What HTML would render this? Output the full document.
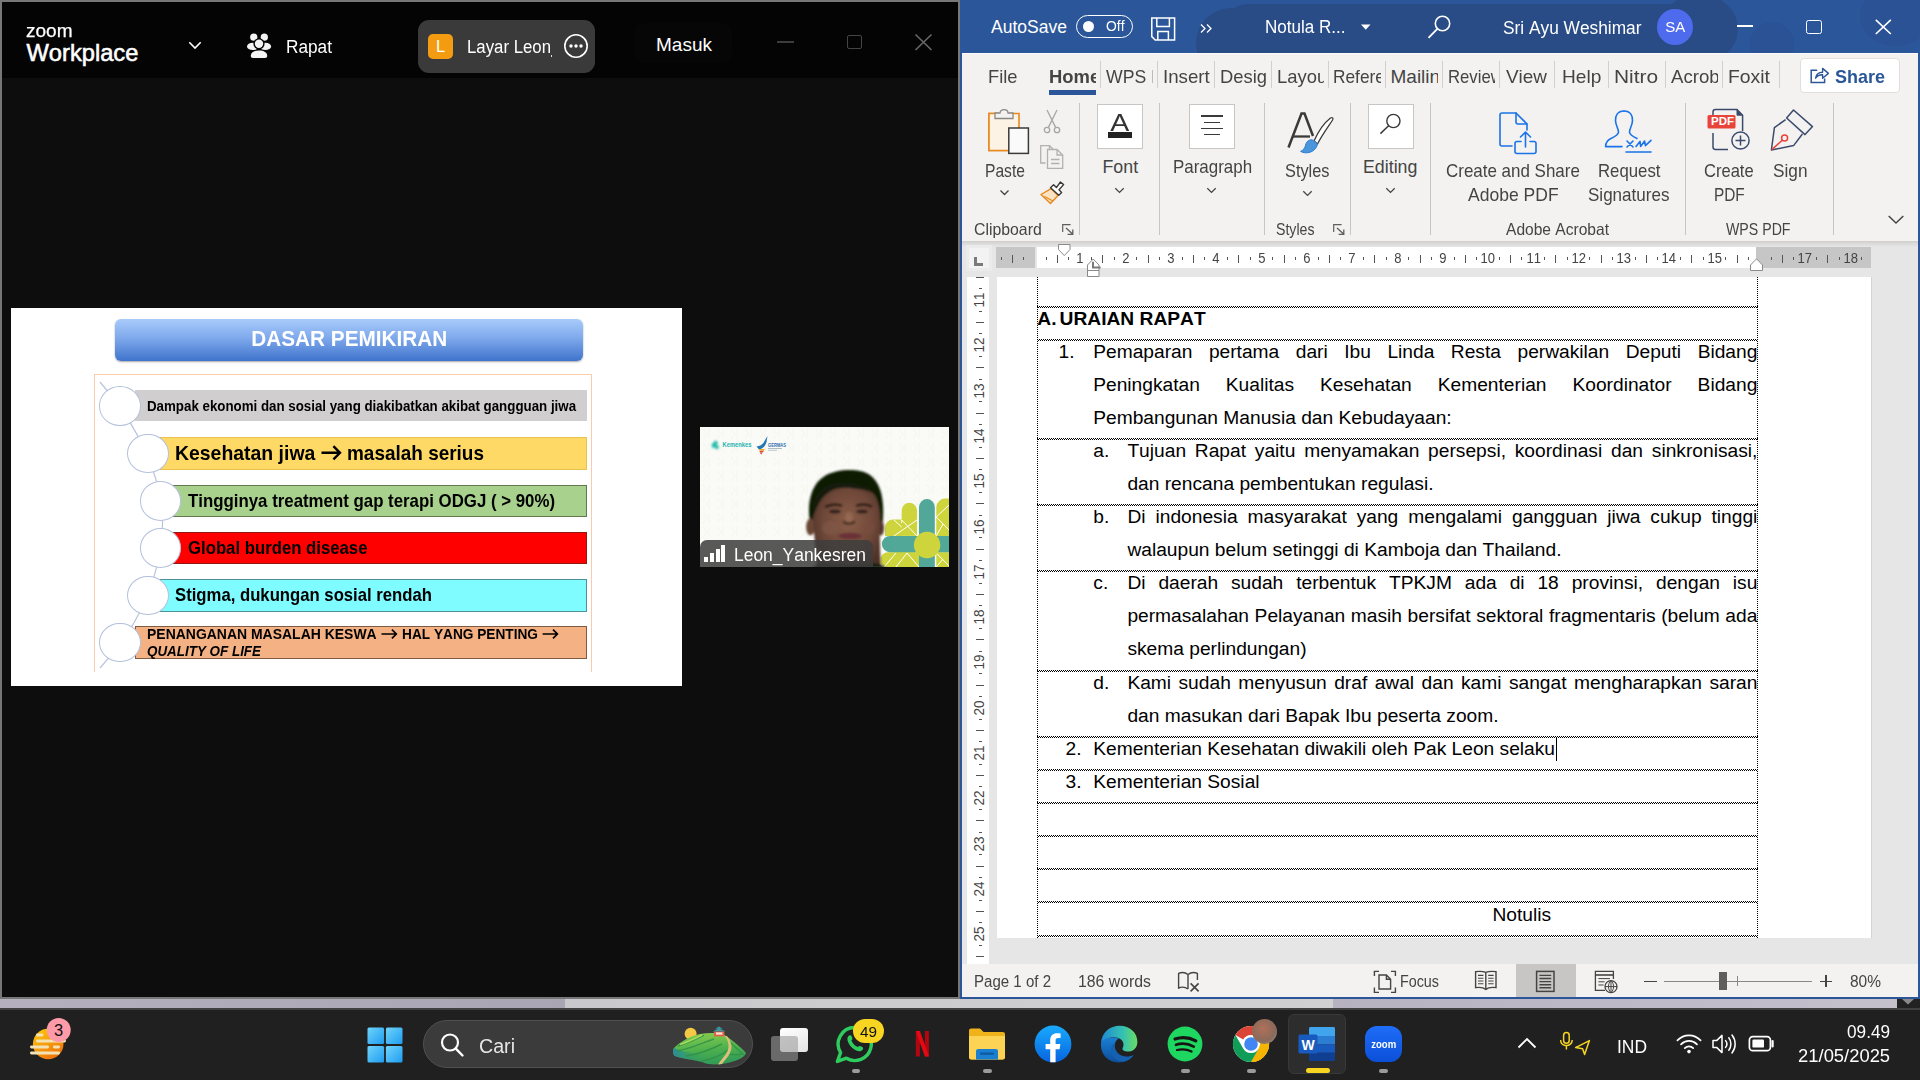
<!DOCTYPE html>
<html><head><meta charset="utf-8"><title>Screen</title>
<style>
html,body{margin:0;padding:0}
body{width:1920px;height:1080px;overflow:hidden;position:relative;background:#bdb9c6;font-family:"Liberation Sans",sans-serif;font-kerning:none;font-variant-ligatures:none;}
.a{position:absolute;box-sizing:border-box}
.t{position:absolute;white-space:nowrap;display:block}
svg{position:absolute;overflow:visible}
</style></head><body>
<div class="a" style="left:0px;top:0px;width:960px;height:999px;background:#777777;"></div>
<div class="a" style="left:2px;top:2px;width:956px;height:995px;background:#0d0d0d;"></div>
<div class="a" style="left:2px;top:2px;width:956px;height:76px;background:#040404;"></div>
<span class="t" style="left:25.60px;top:15.20px;font-size:18.9px;line-height:31px;color:#fff;transform:scaleX(1.0083);transform-origin:0 0;-webkit-text-stroke:0.25px #fff;">zoom</span>
<span class="t" style="left:26.50px;top:35.30px;font-size:23.7px;line-height:36px;color:#fff;-webkit-text-stroke:0.55px #fff;">Workplace</span>
<svg style="left:186px;top:38px" width="18" height="14"><path d="M3.3 4.3 L9 10 L14.7 4.3" fill="none" stroke="#fff" stroke-width="1.6"/></svg>
<svg style="left:246px;top:33px" width="26" height="26" viewBox="0 0 26 26">
<circle cx="7.75" cy="4.2" r="3.6" fill="#f4f4f4"/><circle cx="18.3" cy="4.2" r="3.6" fill="#f4f4f4"/>
<ellipse cx="6.8" cy="13.4" rx="5.8" ry="3.7" fill="#f4f4f4"/><ellipse cx="19.3" cy="13.4" rx="5.8" ry="3.7" fill="#f4f4f4"/>
<circle cx="13" cy="10.8" r="5.6" fill="#040404"/><circle cx="13" cy="10.8" r="4.2" fill="#f4f4f4"/>
<path d="M4.8 22.8 C4.8 19.4 8 17.4 13 17.4 C18 17.4 21.2 19.4 21.2 22.8 C21.2 24.3 20.4 25 19 25 H7 C5.6 25 4.8 24.3 4.8 22.8Z" fill="#f4f4f4" stroke="#040404" stroke-width="1.5" paint-order="stroke"/>
</svg>
<span class="t" style="left:286.00px;top:32.00px;font-size:18px;line-height:30px;color:#fff;transform:scaleX(0.9576);transform-origin:0 0;">Rapat</span>
<div class="a" style="left:418px;top:20px;width:177px;height:53px;background:#3a3a3a;border-radius:11px;"></div>
<div class="a" style="left:428px;top:34px;width:25px;height:25px;background:#f39c12;border-radius:5px;"></div>
<span class="t" style="left:435.91px;top:32.30px;font-size:16.5px;line-height:28px;color:#fff;">L</span>
<span class="t" style="left:467.00px;top:31.80px;font-size:18px;line-height:30px;color:#fff;transform:scaleX(0.9325);transform-origin:0 0;">Layar Leon</span>
<div class="a" style="left:551px;top:55px;width:1px;height:2px;background:#ddd;"></div>
<svg style="left:563px;top:33px" width="26" height="26"><circle cx="13" cy="13" r="11.2" fill="none" stroke="#fff" stroke-width="1.6"/><circle cx="8" cy="13" r="1.7" fill="#fff"/><circle cx="13" cy="13" r="1.7" fill="#fff"/><circle cx="18" cy="13" r="1.7" fill="#fff"/></svg>
<div class="a" style="left:635px;top:23px;width:97px;height:40px;background:#060606;border-radius:8px;"></div>
<span class="t" style="left:656.00px;top:28.60px;font-size:19px;line-height:31px;color:#fff;">Masuk</span>
<div class="a" style="left:777px;top:41px;width:17px;height:1.6px;background:#3c3c3c;"></div>
<div class="a" style="left:847px;top:35px;width:15px;height:14px;background:transparent;border:1.5px solid #444;border-radius:2px;"></div>
<svg style="left:914px;top:33px" width="20" height="20"><path d="M1.5 1.5 L17.5 17 M17.5 1.5 L1.5 17" stroke="#686868" stroke-width="1.6" fill="none"/></svg>
<div class="a" style="left:11px;top:308px;width:671px;height:378px;background:#ffffff;"></div>
<div class="a" style="left:115px;top:319px;width:468px;height:42px;background:linear-gradient(#a9cbfb 0%,#7fa9ec 45%,#3f74cc 100%);border-radius:6px;box-shadow:0 1px 2px rgba(0,0,0,.35);"></div>
<span class="t" style="left:243.24px;top:321.00px;font-size:22.5px;line-height:35px;color:#fff;font-weight:bold;transform:scaleX(0.9223);transform-origin:50% 0;">DASAR PEMIKIRAN</span>
<div class="a" style="left:94px;top:374px;width:498px;height:298px;background:transparent;border:1.5px solid #f8cbad;border-bottom:none;"></div>
<svg style="left:0;top:0" width="700" height="700"><path d="M100 382 C 150 440,170 500,160 548 C 155 590,135 630,100 668" fill="none" stroke="#b8c4dc" stroke-width="1.2"/></svg>
<div class="a" style="left:135px;top:390px;width:452px;height:31px;background:#d0cece;border:none;"></div>
<div class="a" style="left:160px;top:437px;width:427px;height:33px;background:#ffd966;border:1px solid #e8c14e;"></div>
<div class="a" style="left:172px;top:485px;width:415px;height:32px;background:#a9d18e;border:1px solid #62784f;"></div>
<div class="a" style="left:172px;top:532px;width:415px;height:32px;background:#ff0000;border:1px solid #8f1a10;"></div>
<div class="a" style="left:160px;top:579px;width:427px;height:33px;background:#7ffcff;border:1px solid #4f8f96;"></div>
<div class="a" style="left:135px;top:626px;width:452px;height:33px;background:#f4b183;border:1px solid #7d5a42;"></div>
<span class="t" style="left:147.00px;top:392.50px;font-size:14px;line-height:26px;color:#000;font-weight:bold;transform:scaleX(0.9508);transform-origin:0 0;">Dampak ekonomi dan sosial yang diakibatkan akibat gangguan jiwa</span>
<span class="t" style="left:174.50px;top:436.00px;font-size:21px;line-height:33px;color:#000;font-weight:bold;transform:scaleX(0.9246);transform-origin:0 0;">Kesehatan jiwa</span>
<span class="t" style="left:347.00px;top:436.00px;font-size:21px;line-height:33px;color:#000;font-weight:bold;transform:scaleX(0.9027);transform-origin:0 0;">masalah serius</span>
<svg style="left:0;top:0" width="700" height="700"><path d="M321.5 452.8 H339 M333.4 446.2 L340 452.8 L333.4 459.40000000000003" fill="none" stroke="#000" stroke-width="2.4"/></svg>
<span class="t" style="left:187.50px;top:484.50px;font-size:18.5px;line-height:31px;color:#000;font-weight:bold;transform:scaleX(0.9096);transform-origin:0 0;">Tingginya treatment gap terapi ODGJ ( &gt; 90%)</span>
<span class="t" style="left:187.50px;top:531.50px;font-size:18.5px;line-height:31px;color:#000;font-weight:bold;transform:scaleX(0.9046);transform-origin:0 0;">Global burden disease</span>
<span class="t" style="left:174.50px;top:578.50px;font-size:18.5px;line-height:31px;color:#000;font-weight:bold;transform:scaleX(0.9025);transform-origin:0 0;">Stigma, dukungan sosial rendah</span>
<span class="t" style="left:147.00px;top:621.00px;font-size:14.5px;line-height:26px;color:#000;font-weight:bold;transform:scaleX(0.9633);transform-origin:0 0;">PENANGANAN MASALAH KESWA</span>
<span class="t" style="left:401.80px;top:621.00px;font-size:14.5px;line-height:26px;color:#000;font-weight:bold;transform:scaleX(0.9431);transform-origin:0 0;">HAL YANG PENTING</span>
<svg style="left:0;top:0" width="700" height="700"><path d="M381.5 634 H395.3 M391.90000000000003 629.6 L396.3 634 L391.90000000000003 638.4" fill="none" stroke="#000" stroke-width="1.7"/></svg>
<svg style="left:0;top:0" width="700" height="700"><path d="M542.6 634 H556.4 M553.0 629.6 L557.4 634 L553.0 638.4" fill="none" stroke="#000" stroke-width="1.7"/></svg>
<span class="t" style="left:147.00px;top:637.50px;font-size:14.5px;line-height:26px;color:#000;font-weight:bold;font-style:italic;transform:scaleX(0.9251);transform-origin:0 0;">QUALITY OF LIFE</span>
<div class="a" style="left:99.3px;top:386.2px;width:41.4px;height:39.6px;border-radius:50%;background:#fff;border:1px solid #b4c0dc;"></div>
<div class="a" style="left:127.3px;top:433.7px;width:41.4px;height:39.6px;border-radius:50%;background:#fff;border:1px solid #b4c0dc;"></div>
<div class="a" style="left:139.6px;top:481.2px;width:41.4px;height:39.6px;border-radius:50%;background:#fff;border:1px solid #b4c0dc;"></div>
<div class="a" style="left:139.6px;top:528.2px;width:41.4px;height:39.6px;border-radius:50%;background:#fff;border:1px solid #b4c0dc;"></div>
<div class="a" style="left:127.3px;top:575.7px;width:41.4px;height:39.6px;border-radius:50%;background:#fff;border:1px solid #b4c0dc;"></div>
<div class="a" style="left:99.3px;top:622.8px;width:41.4px;height:39.6px;border-radius:50%;background:#fff;border:1px solid #b4c0dc;"></div>
<div class="a" style="left:700px;top:427px;width:249px;height:140px;background:#f4f6ee;overflow:hidden;"></div>
<svg style="left:700px;top:427px" width="249" height="140" viewBox="0 0 249 140">
<defs><clipPath id="vc"><rect width="249" height="140"/></clipPath>
<filter id="bl" x="-10%" y="-10%" width="120%" height="120%"><feGaussianBlur stdDeviation="1.1"/></filter>
<filter id="bl2" x="-20%" y="-20%" width="140%" height="140%"><feGaussianBlur stdDeviation="2"/></filter>
<radialGradient id="fg" cx="52%" cy="45%" r="60%"><stop offset="0" stop-color="#8a5e48"/><stop offset="0.6" stop-color="#70493a"/><stop offset="1" stop-color="#4f3228"/></radialGradient>
<pattern id="bgp" width="14" height="14" patternUnits="userSpaceOnUse"><path d="M3 2 L7 7 L3 12 M9 2 V12" stroke="#f3f5ed" stroke-width="1" fill="none"/></pattern></defs>
<g clip-path="url(#vc)">
<rect width="249" height="140" fill="#fafbf6"/><rect width="249" height="140" fill="url(#bgp)"/>
<!-- logos -->
<g filter="url(#bl)" opacity="0.95">
<path d="M11.5 17.5 l4.2 -4.2 l2.6 2.6 l-1.6 1.6 l2.6 2.6 l-2.6 2.6 l-2.6 -2.6 l-1.6 1.6 z" fill="#1fb9a9"/>
</g>
<text x="22.5" y="20" font-family="Liberation Sans, sans-serif" font-weight="bold" font-size="6.3" fill="#1fb3b3" textLength="29" lengthAdjust="spacingAndGlyphs">Kemenkes</text>
<path d="M56.5 19.5 C60 19 63 17.5 64.5 14 L67.5 9 L66.5 15 C65.5 19 62.5 22 59 22.5 Z" fill="#2478b8"/>
<path d="M59 22 h6 l-1 1.5 h-4.6 z" fill="#f0b020"/><path d="M59.4 23.8 h4.6 l-1 1.5 h-3 z" fill="#e04a30"/><path d="M59.8 25.6 h2.8 l-1.4 1.8 z" fill="#d83030"/>
<text x="68" y="19.6" font-family="Liberation Sans, sans-serif" font-weight="bold" font-size="5.2" fill="#2b6cb0" textLength="18" lengthAdjust="spacingAndGlyphs">GERMAS</text>
<rect x="68" y="21" width="14" height="0.9" fill="#a8b4c0"/><rect x="68" y="22.8" width="9" height="0.9" fill="#b8c2cc"/>
<!-- decor -->
<g>
<rect x="180.8" y="125.2" width="38.2" height="16" rx="7" fill="#cdd43c"/><rect x="195" y="125.2" width="24" height="16" fill="#cdd43c"/>
<path d="M196 140 L207 126 L219 140 M184 140 L196 126" stroke="#fff" stroke-width="1" fill="none"/>
<rect x="236.3" y="125.2" width="13" height="16" fill="#cdd43c"/><path d="M236.3 126 L249 139 M236.3 140 L243 132" stroke="#fff" stroke-width="1" fill="none"/>
<path d="M236.3 80 a9 9 0 0 1 9 -8.4 h4 v37.3 h-13 z" fill="#cdd43c"/><path d="M236.3 90 L249 78 M236.3 90 L249 103 M236.3 108.9 L243 97" stroke="#fff" stroke-width="1" fill="none"/>
<path d="M201.7 93 V83.4 a7.65 7.65 0 0 1 15.3 0 V93 z" fill="#cdd43c"/>
<rect x="194" y="93" width="23" height="15.9" fill="#cdd43c"/>
<path d="M185 108.9 v-8.2 a8.1 8.1 0 0 1 8.1 -8.1 h8.6 v16.3 z" fill="#cdd43c"/>
<path d="M194 108.9 L217 93 M201.7 93 L217 108.9 M194 93 L201.7 100 M201.7 93 V96" stroke="#fff" stroke-width="1" fill="none"/>
<path d="M219 140 V80 a7.9 7.9 0 0 1 15.8 0 V140 z" fill="#52a898"/>
<path d="M249 108.9 H190 a8.15 8.15 0 0 0 0 16.3 H249 z" fill="#52a898"/>
<circle cx="227.1" cy="118" r="13.2" fill="#cdd43c"/>
</g>
<!-- person -->
<g filter="url(#bl)">
<path d="M111 100 C106 80 110 58 124 49.5 C134 43 150 42 160 44 C173 46 182 58 183 78 C183.5 88 183 96 181.5 104 L170 70 L124 70 Z" fill="#0d1a05"/>
<ellipse cx="110.5" cy="100" rx="4.4" ry="8.5" fill="#6a4636"/><ellipse cx="181" cy="101" rx="3" ry="7.5" fill="#553629"/>
<path d="M113.5 98 C111.5 78 117 63.5 131 59 C144 56 158 56.5 168 61.5 C178 67 181 82 180 98 C179.5 112 180 126 181 140 L117 140 C116 128 114.5 112 113.5 98 Z" fill="url(#fg)"/>
<path d="M112.5 92 C111 72 120 58.5 134 56.5 C148 54.5 164 56.5 175 67 C167 62.5 150 60 138 61.5 C126 63.5 118 74 112.5 92 Z" fill="#161a0a"/>
<path d="M125 80 C131 77 138 77 142 79 M156 79 C161 77 168 77 172 80" stroke="#2e1d16" stroke-width="2.6" fill="none"/>
<ellipse cx="135" cy="84.5" rx="6" ry="2" fill="#33211b"/><ellipse cx="162" cy="84.5" rx="6" ry="2" fill="#33211b"/>
<path d="M143 94.5 C146 97.5 152 97.5 155 94.5" stroke="#3e261d" stroke-width="2.2" fill="none"/>
<ellipse cx="149" cy="90" rx="4" ry="5" fill="#9a6c56" opacity="0.7"/>
<ellipse cx="150" cy="109" rx="12" ry="3.2" fill="#6a3038"/>
<ellipse cx="130" cy="101" rx="8" ry="7" fill="#84594a" opacity="0.55"/><ellipse cx="168" cy="101" rx="7" ry="7" fill="#7a4e40" opacity="0.5"/>
<path d="M112 141 C116 137 122 135.5 130 137 L170 137 C176 135.5 182 137 186 141 Z" fill="#12240f"/>
</g>
</g></svg>
<div class="a" style="left:700px;top:539.5px;width:173px;height:27.5px;background:rgba(62,62,62,0.86);border-radius:7px 7px 0 0;"></div>
<div class="a" style="left:704px;top:557.2px;width:4px;height:5.3px;background:#fff;"></div>
<div class="a" style="left:709.8px;top:553.3px;width:4px;height:9.2px;background:#fff;"></div>
<div class="a" style="left:715.6px;top:549.2px;width:4px;height:13.3px;background:#fff;"></div>
<div class="a" style="left:721.4px;top:545.2px;width:4px;height:17.3px;background:#fff;"></div>
<span class="t" style="left:734.00px;top:540.00px;font-size:18px;line-height:30px;color:#fff;transform:scaleX(0.9697);transform-origin:0 0;">Leon_Yankesren</span>
<div class="a" style="left:960px;top:0px;width:960px;height:999px;background:#2b579a;"></div>
<div class="a" style="left:960px;top:0;width:960px;height:53px;overflow:hidden"><div class="a" style="left:262px;top:4px;width:490px;height:60px;background:#294c87;border-radius:26px 30px 0 0"></div><div class="a" style="left:236px;top:8px;width:70px;height:70px;background:#294c87;border-radius:50%"></div><div class="a" style="left:700px;top:-6px;width:78px;height:70px;background:#294c87;border-radius:50%"></div><div class="a" style="left:790px;top:22px;width:44px;height:44px;background:#2a5295;border-radius:50%"></div><div class="a" style="left:900px;top:-14px;width:70px;height:60px;background:#2a5295;border-radius:50%"></div></div>
<span class="t" style="left:991.00px;top:12.00px;font-size:17.5px;line-height:30px;color:#fff;">AutoSave</span>
<div class="a" style="left:1076px;top:14.5px;width:57px;height:23px;background:transparent;border:1.5px solid #fff;border-radius:12px;"></div>
<div class="a" style="left:1082.5px;top:20.5px;width:11px;height:11px;background:#fff;border-radius:50%;"></div>
<span class="t" style="left:1105.50px;top:13.00px;font-size:14px;line-height:26px;color:#fff;transform:scaleX(0.9908);transform-origin:0 0;">Off</span>
<svg style="left:1150px;top:16px" width="27" height="26" viewBox="0 0 27 26"><path d="M1.8 2 H24.6 V24 H5.2 L1.8 20.6 Z" fill="none" stroke="#fff" stroke-width="1.5"/><path d="M6.8 2 V10.4 H19.4 V2" fill="none" stroke="#fff" stroke-width="1.5"/><path d="M7.8 24 V15.6 H18.4 V24" fill="none" stroke="#fff" stroke-width="1.5"/></svg>
<svg style="left:1199px;top:23px" width="14" height="12"><path d="M2 1.5 L6 5.5 L2 9.5 M8 1.5 L12 5.5 L8 9.5" fill="none" stroke="#fff" stroke-width="1.3"/></svg>
<span class="t" style="left:1264.50px;top:12.00px;font-size:17.5px;line-height:30px;color:#fff;transform:scaleX(0.9736);transform-origin:0 0;">Notula R...</span>
<svg style="left:1360px;top:23px" width="12" height="8"><path d="M1 1.5 H10.5 L5.75 6.8 Z" fill="#fff"/></svg>
<svg style="left:1425px;top:12px" width="30" height="30"><circle cx="17.5" cy="11.5" r="7.2" fill="none" stroke="#fff" stroke-width="1.6"/><path d="M12.3 16.8 L3.5 25.8" stroke="#fff" stroke-width="1.8" fill="none"/></svg>
<span class="t" style="left:1502.50px;top:12.50px;font-size:17.5px;line-height:30px;color:#fff;transform:scaleX(0.9891);transform-origin:0 0;">Sri Ayu Weshimar</span>
<div class="a" style="left:1657px;top:9px;width:36px;height:36px;background:#4f6bed;border-radius:50%;"></div>
<span class="t" style="left:1665.66px;top:14.00px;font-size:14px;line-height:26px;color:#fff;transform:scaleX(1.0707);transform-origin:50% 0;">SA</span>
<div class="a" style="left:1737px;top:25px;width:16px;height:1.6px;background:#fff;"></div>
<div class="a" style="left:1806px;top:19.5px;width:15.5px;height:14.5px;background:transparent;border:1.6px solid #fff;border-radius:2.5px;"></div>
<svg style="left:1874px;top:18px" width="19" height="18"><path d="M1.8 1.8 L16.8 16 M16.8 1.8 L1.8 16" stroke="#fff" stroke-width="1.6" fill="none"/></svg>
<div class="a" style="left:962px;top:53px;width:956px;height:188px;background:#f3f2f1;"></div>
<div class="a" style="left:962px;top:53px;width:956px;height:1px;background:#fbfbfa;"></div>
<span class="t" style="left:987.50px;top:61.00px;font-size:19px;line-height:31px;color:#444444;transform:scaleX(0.9635);transform-origin:0 0;">File</span>
<div class="a" style="left:1048.7px;top:60px;width:47.09999999999991px;height:32px;overflow:hidden"><span class="t" style="left:0.00px;top:1.00px;font-size:19px;line-height:31px;color:#444444;font-weight:bold;transform:scaleX(0.9700);transform-origin:0 0;">Home</span></div>
<div class="a" style="left:1049px;top:90px;width:47px;height:4.5px;background:#2b579a;"></div>
<div class="a" style="left:1100.0px;top:61px;width:1px;height:27px;background:#d2d0ce;"></div>
<div class="a" style="left:1157.0px;top:61px;width:1px;height:27px;background:#d2d0ce;"></div>
<div class="a" style="left:1214.0px;top:61px;width:1px;height:27px;background:#d2d0ce;"></div>
<div class="a" style="left:1271.0px;top:61px;width:1px;height:27px;background:#d2d0ce;"></div>
<div class="a" style="left:1328.0px;top:61px;width:1px;height:27px;background:#d2d0ce;"></div>
<div class="a" style="left:1385.0px;top:61px;width:1px;height:27px;background:#d2d0ce;"></div>
<div class="a" style="left:1442.0px;top:61px;width:1px;height:27px;background:#d2d0ce;"></div>
<div class="a" style="left:1499.0px;top:61px;width:1px;height:27px;background:#d2d0ce;"></div>
<div class="a" style="left:1554.0px;top:61px;width:1px;height:27px;background:#d2d0ce;"></div>
<div class="a" style="left:1608.0px;top:61px;width:1px;height:27px;background:#d2d0ce;"></div>
<div class="a" style="left:1665.0px;top:61px;width:1px;height:27px;background:#d2d0ce;"></div>
<div class="a" style="left:1722.0px;top:61px;width:1px;height:27px;background:#d2d0ce;"></div>
<div class="a" style="left:1779.0px;top:61px;width:1px;height:27px;background:#d2d0ce;"></div>
<div class="a" style="left:1105.7px;top:60px;width:47.799999999999955px;height:32px;overflow:hidden"><span class="t" style="left:0.00px;top:1.00px;font-size:19px;line-height:31px;color:#444444;transform:scaleX(0.9300);transform-origin:0 0;">WPS PDF</span></div>
<div class="a" style="left:1162.5px;top:60px;width:50.5px;height:32px;overflow:hidden"><span class="t" style="left:0.00px;top:1.00px;font-size:19px;line-height:31px;color:#444444;transform:scaleX(0.9840);transform-origin:0 0;">Insert</span></div>
<div class="a" style="left:1220px;top:60px;width:47.5px;height:32px;overflow:hidden"><span class="t" style="left:0.00px;top:1.00px;font-size:19px;line-height:31px;color:#444444;transform:scaleX(0.9680);transform-origin:0 0;">Design</span></div>
<div class="a" style="left:1276.5px;top:60px;width:47.5px;height:32px;overflow:hidden"><span class="t" style="left:0.00px;top:1.00px;font-size:19px;line-height:31px;color:#444444;transform:scaleX(0.9700);transform-origin:0 0;">Layout</span></div>
<div class="a" style="left:1333px;top:60px;width:48.299999999999955px;height:32px;overflow:hidden"><span class="t" style="left:0.00px;top:1.00px;font-size:19px;line-height:31px;color:#444444;transform:scaleX(0.9090);transform-origin:0 0;">References</span></div>
<div class="a" style="left:1390.5px;top:60px;width:47.799999999999955px;height:32px;overflow:hidden"><span class="t" style="left:0.00px;top:1.00px;font-size:19px;line-height:31px;color:#444444;">Mailings</span></div>
<div class="a" style="left:1447.5px;top:60px;width:47.5px;height:32px;overflow:hidden"><span class="t" style="left:0.00px;top:1.00px;font-size:19px;line-height:31px;color:#444444;transform:scaleX(0.8800);transform-origin:0 0;">Review</span></div>
<span class="t" style="left:1506.00px;top:61.00px;font-size:19px;line-height:31px;color:#444444;transform:scaleX(0.9955);transform-origin:0 0;">View</span>
<span class="t" style="left:1561.70px;top:61.00px;font-size:19px;line-height:31px;color:#444444;transform:scaleX(1.0057);transform-origin:0 0;">Help</span>
<div class="a" style="left:1613.7px;top:60px;width:47.299999999999955px;height:32px;overflow:hidden"><span class="t" style="left:0.00px;top:1.00px;font-size:19px;line-height:31px;color:#444444;transform:scaleX(1.1000);transform-origin:0 0;">Nitro Pro</span></div>
<div class="a" style="left:1670.5px;top:60px;width:47.799999999999955px;height:32px;overflow:hidden"><span class="t" style="left:0.00px;top:1.00px;font-size:19px;line-height:31px;color:#444444;transform:scaleX(0.9800);transform-origin:0 0;">Acrobat</span></div>
<span class="t" style="left:1727.50px;top:61.00px;font-size:19px;line-height:31px;color:#444444;transform:scaleX(1.0201);transform-origin:0 0;">Foxit</span>
<div class="a" style="left:1799.5px;top:57.5px;width:100px;height:35px;background:#fff;border:1px solid #e1dfdd;border-radius:4px;"></div>
<svg style="left:1809px;top:65px" width="22" height="20" viewBox="0 0 22 20"><path d="M8.2 5.2 H2.2 V17.6 H15.6 V13.4" fill="none" stroke="#2b579a" stroke-width="1.5"/><path d="M6.6 13.2 C7.2 9.2 10 7.2 13.6 7.2 V3.4 L19.4 8.4 L13.6 13.2 V9.8 C10.6 9.6 8.4 10.6 6.6 13.2 Z" fill="none" stroke="#2b579a" stroke-width="1.4" stroke-linejoin="round"/></svg>
<span class="t" style="left:1835.00px;top:61.00px;font-size:19px;line-height:31px;color:#2b579a;font-weight:bold;transform:scaleX(0.9469);transform-origin:0 0;">Share</span>
<div class="a" style="left:1079.0px;top:103px;width:1px;height:132px;background:#c8c6c4;"></div>
<div class="a" style="left:1159.0px;top:103px;width:1px;height:132px;background:#c8c6c4;"></div>
<div class="a" style="left:1264.0px;top:103px;width:1px;height:132px;background:#c8c6c4;"></div>
<div class="a" style="left:1350.0px;top:103px;width:1px;height:132px;background:#c8c6c4;"></div>
<div class="a" style="left:1430.0px;top:103px;width:1px;height:132px;background:#c8c6c4;"></div>
<div class="a" style="left:1685.0px;top:103px;width:1px;height:132px;background:#c8c6c4;"></div>
<div class="a" style="left:1832.5px;top:103px;width:1px;height:132px;background:#c8c6c4;"></div>
<svg style="left:986px;top:107px" width="46" height="48" viewBox="0 0 46 48">
<path d="M12 6.5 H3 V43.5 H22" fill="#fdebd0" stroke="#e8891c" stroke-width="1.6"/>
<path d="M3 6.5 H33 V24 H22 V43.5 H3 Z" fill="#fdf3e4" stroke="none"/>
<path d="M12 6.5 H3 V43.5 H22 M24 6.5 H33 V24" fill="none" stroke="#e8891c" stroke-width="1.6"/>
<path d="M9 11.5 V6 H14 C14 1.5 22 1.5 22 6 H27 V11.5 Z" fill="#f3f2f1" stroke="#8a8886" stroke-width="1.3"/>
<rect x="22.8" y="21" width="19.6" height="25.4" fill="#fafafa" stroke="#3b3a39" stroke-width="1.5"/>
</svg>
<span class="t" style="left:985.00px;top:155.60px;font-size:17.8px;line-height:30px;color:#444444;transform:scaleX(0.8788);transform-origin:0 0;">Paste</span>
<svg style="left:999px;top:189px" width="12" height="8"><path d="M1.5 1.5 L5.5 5.5 L9.5 1.5" fill="none" stroke="#444" stroke-width="1.3"/></svg>
<svg style="left:1042px;top:108px" width="20" height="27" viewBox="0 0 20 27"><g fill="none" stroke="#a8a6a4" stroke-width="1.3">
<path d="M5 2 L13.6 19.4 M15 2 L6.4 19.4"/><circle cx="5" cy="22" r="2.7"/><circle cx="15" cy="22" r="2.7"/></g></svg>
<svg style="left:1039px;top:144px" width="26" height="26" viewBox="0 0 26 26"><g fill="none" stroke="#b3b1af" stroke-width="1.3">
<path d="M6.5 19 H1.7 V1.7 H10.5 V5"/><path d="M10.5 1.7 L14 5"/>
<path d="M8.5 5.5 H18 L23.7 11 V24.3 H8.5 Z"/><path d="M18 5.5 V11 H23.7"/><path d="M12 15.5 H20.5 M12 19.5 H20.5"/></g></svg>
<svg style="left:1039px;top:180px" width="27" height="25" viewBox="0 0 27 25">
<path d="M2 14.5 L12 8.6 L19 15.6 L11.5 23.5 Z" fill="#fbe3c2" stroke="#e8891c" stroke-width="1.4" stroke-linejoin="round"/>
<path d="M5.5 16.5 L14 21" stroke="#e8891c" stroke-width="1.2"/>
<path d="M11.5 7.8 L14.6 4.8 L17.4 7.6 L21.4 2 L24.6 4.6 L20 9.8 L22.6 12.4 L19.8 15.2 Z" fill="#fff" stroke="#3b3a39" stroke-width="1.4" stroke-linejoin="round"/>
</svg>
<span class="t" style="left:974.00px;top:214.80px;font-size:16.5px;line-height:28px;color:#444444;transform:scaleX(0.9587);transform-origin:0 0;">Clipboard</span>
<svg style="left:1062px;top:223.5px" width="13" height="12" viewBox="0 0 13 12"><path d="M0.7 8 V0.7 H8.6" fill="none" stroke="#605e5c" stroke-width="1.2"/><path d="M4 4 L10.6 10 M10.8 5.4 V10.4 H5.6" fill="none" stroke="#605e5c" stroke-width="1.3"/></svg>
<div class="a" style="left:1097px;top:104px;width:46px;height:45px;background:#fff;border:1.5px solid #c8c6c4;"></div>
<span class="t" style="left:1112.33px;top:104.50px;font-size:23px;line-height:36px;color:#333;transform:scaleX(1.2386);transform-origin:50% 0;">A</span>
<div class="a" style="left:1108px;top:132px;width:24px;height:5.5px;background:#222;"></div>
<span class="t" style="left:1102.50px;top:152.00px;font-size:17.8px;line-height:30px;color:#444444;">Font</span>
<svg style="left:1114.2px;top:186.5px" width="12" height="8"><path d="M1.3 1.3 L5.5 5.4 L9.7 1.3" fill="none" stroke="#444" stroke-width="1.3"/></svg>
<div class="a" style="left:1189px;top:104px;width:46px;height:45px;background:#fff;border:1.5px solid #c8c6c4;"></div>
<div class="a" style="left:1201px;top:115.4px;width:22px;height:1.3px;background:#3b3a39;"></div>
<div class="a" style="left:1204px;top:121.60000000000001px;width:16px;height:1.3px;background:#3b3a39;"></div>
<div class="a" style="left:1201px;top:127.80000000000001px;width:22px;height:1.3px;background:#3b3a39;"></div>
<div class="a" style="left:1204px;top:134.0px;width:16px;height:1.3px;background:#3b3a39;"></div>
<span class="t" style="left:1172.50px;top:152.00px;font-size:17.8px;line-height:30px;color:#444444;transform:scaleX(0.9528);transform-origin:0 0;">Paragraph</span>
<svg style="left:1206.0px;top:186.5px" width="12" height="8"><path d="M1.3 1.3 L5.5 5.4 L9.7 1.3" fill="none" stroke="#444" stroke-width="1.3"/></svg>
<svg style="left:1284px;top:108px" width="52" height="48" viewBox="0 0 52 48">
<path d="M4.5 39.5 L17.5 5.5 H20.5 L29 28" fill="none" stroke="#3b3a39" stroke-width="2.5"/><path d="M9 28.5 H26" stroke="#3b3a39" stroke-width="2.3"/>
<path d="M30 33 C34 24 40 15 46.5 10 C48.5 9 49.6 10 48.6 12 C44 19 38 27 33.5 36 Z" fill="#fff" stroke="#3b3a39" stroke-width="1.3"/>
<path d="M29.6 32.4 C26 30.6 22.4 33 21.6 37 C21 40 19.6 42 16.6 43.4 C22 46.6 31.6 44.6 33.6 36 Z" fill="#4a95dc" stroke="#2d7fd0" stroke-width="1"/>
</svg>
<span class="t" style="left:1285.00px;top:155.60px;font-size:17.8px;line-height:30px;color:#444444;transform:scaleX(0.9181);transform-origin:0 0;">Styles</span>
<svg style="left:1301.5px;top:189.5px" width="12" height="8"><path d="M1.3 1.3 L5.5 5.4 L9.7 1.3" fill="none" stroke="#444" stroke-width="1.3"/></svg>
<span class="t" style="left:1275.50px;top:214.80px;font-size:16.5px;line-height:28px;color:#444444;transform:scaleX(0.8569);transform-origin:0 0;">Styles</span>
<svg style="left:1332.5px;top:223.5px" width="13" height="12" viewBox="0 0 13 12"><path d="M0.7 8 V0.7 H8.6" fill="none" stroke="#605e5c" stroke-width="1.2"/><path d="M4 4 L10.6 10 M10.8 5.4 V10.4 H5.6" fill="none" stroke="#605e5c" stroke-width="1.3"/></svg>
<div class="a" style="left:1368px;top:104px;width:46px;height:45px;background:#fff;border:1.5px solid #c8c6c4;"></div>
<svg style="left:1376px;top:110px" width="30" height="30"><circle cx="17.4" cy="11" r="6.6" fill="none" stroke="#3b3a39" stroke-width="1.4"/><path d="M12.6 15.8 L4.4 23.6" stroke="#3b3a39" stroke-width="1.5"/></svg>
<span class="t" style="left:1363.00px;top:152.00px;font-size:17.8px;line-height:30px;color:#444444;">Editing</span>
<svg style="left:1384.5px;top:186.5px" width="12" height="8"><path d="M1.3 1.3 L5.5 5.4 L9.7 1.3" fill="none" stroke="#444" stroke-width="1.3"/></svg>
<svg style="left:1497px;top:110px" width="42" height="46" viewBox="0 0 42 46"><g fill="none" stroke="#1a73e8" stroke-width="1.6" stroke-linejoin="round" stroke-linecap="round">
<path d="M15 36 H5 C3.6 36 3 35.4 3 34 V5 C3 3.6 3.6 3 5 3 H19 L30 14 V20"/><path d="M19 3 V12 C19 13.4 19.6 14 21 14 H30"/>
<path d="M24 31.5 H20 C18.6 31.5 18 32.1 18 33.5 V41.5 C18 42.9 18.6 43.5 20 43.5 H37 C38.4 43.5 39 42.9 39 41.5 V33.5 C39 32.1 38.4 31.5 37 31.5 H33"/>
<path d="M28.5 37 V22.5 M23.5 27 L28.5 22 L33.5 27"/></g></svg>
<span class="t" style="left:1446.00px;top:155.60px;font-size:17.8px;line-height:30px;color:#444444;transform:scaleX(0.9537);transform-origin:0 0;">Create and Share</span>
<span class="t" style="left:1468.00px;top:179.60px;font-size:17.8px;line-height:30px;color:#444444;transform:scaleX(0.9857);transform-origin:0 0;">Adobe PDF</span>
<svg style="left:1603px;top:108px" width="52" height="48" viewBox="0 0 52 48"><g fill="none" stroke="#1a73e8" stroke-width="1.6" stroke-linecap="round" stroke-linejoin="round">
<path d="M21 3 C27.5 3 30 8 29.5 13 C29 18 26.5 21 26.5 24 C26.5 27 30 28.6 34 30.4"/>
<path d="M21 3 C14.5 3 12 8 12.5 13 C13 18 15.5 21 15.5 24 C15.5 27 12 28.6 8 30.4 C4 32.2 2.6 35 2.6 38.6 H19"/>
<path d="M24 33 L30 39 M30 33 L24 39"/>
<path d="M33 38.4 L37 33.4 L37.6 38.4 L41.6 33 L42.4 37.6 L48 32.4"/>
<path d="M23 44 H48"/></g></svg>
<span class="t" style="left:1597.50px;top:155.60px;font-size:17.8px;line-height:30px;color:#444444;transform:scaleX(0.9427);transform-origin:0 0;">Request</span>
<span class="t" style="left:1587.50px;top:179.60px;font-size:17.8px;line-height:30px;color:#444444;transform:scaleX(0.9578);transform-origin:0 0;">Signatures</span>
<span class="t" style="left:1506.00px;top:214.80px;font-size:16.5px;line-height:28px;color:#444444;transform:scaleX(0.9436);transform-origin:0 0;">Adobe Acrobat</span>
<svg style="left:1706px;top:107px" width="48" height="46" viewBox="0 0 48 46">
<path d="M7 26 V40 C7 41.6 7.8 42.4 9.4 42.4 H22" fill="none" stroke="#3b4a6b" stroke-width="1.5"/>
<path d="M7 8 V5 C7 3.4 7.8 2.6 9.4 2.6 H31 L36.6 8.2 V24" fill="none" stroke="#3b4a6b" stroke-width="1.5"/>
<path d="M31 2.6 V8.2 H36.6" fill="#3b4a6b" stroke="#3b4a6b" stroke-width="1"/>
<rect x="1.5" y="8" width="28" height="13.5" rx="1.5" fill="#e8443a"/>
<circle cx="34.5" cy="33.5" r="8.6" fill="#f3f2f1" stroke="#3b4a6b" stroke-width="1.5"/><path d="M34.5 28.5 V38.5 M29.5 33.5 H39.5" stroke="#3b4a6b" stroke-width="1.5"/>
</svg>
<span class="t" style="left:1711.00px;top:109.60px;font-size:11.5px;line-height:22px;color:#fff;font-weight:bold;">PDF</span>
<span class="t" style="left:1704.00px;top:155.60px;font-size:17.8px;line-height:30px;color:#444444;transform:scaleX(0.9303);transform-origin:0 0;">Create</span>
<span class="t" style="left:1713.70px;top:179.60px;font-size:17.8px;line-height:30px;color:#444444;transform:scaleX(0.8651);transform-origin:0 0;">PDF</span>
<svg style="left:1769px;top:107px" width="46" height="46" viewBox="0 0 46 46"><g fill="none" stroke="#3b4a6b" stroke-width="1.5" stroke-linejoin="round">
<path d="M24.5 3 L43.5 19.6 L36 27.6 L17.6 11 Z"/>
<path d="M16.6 12.6 L5.4 20.6 L2.4 43 L24.6 38.6 L33.4 27"/></g>
<path d="M2.8 42.6 L13.6 33" stroke="#e8443a" stroke-width="1.5"/><circle cx="15.6" cy="31" r="3" fill="#f3f2f1" stroke="#e8443a" stroke-width="1.5"/>
</svg>
<span class="t" style="left:1773.00px;top:155.60px;font-size:17.8px;line-height:30px;color:#444444;transform:scaleX(0.9684);transform-origin:0 0;">Sign</span>
<span class="t" style="left:1726.00px;top:214.80px;font-size:16.5px;line-height:28px;color:#444444;transform:scaleX(0.8581);transform-origin:0 0;">WPS PDF</span>
<svg style="left:1887px;top:214px" width="18" height="12"><path d="M1.7 2 L9 9 L16.3 2" fill="none" stroke="#444" stroke-width="1.5"/></svg>
<div class="a" style="left:962px;top:241px;width:956px;height:723px;background:#e6e6e6;"></div>
<div class="a" style="left:962px;top:241px;width:956px;height:6px;background:linear-gradient(#d0cecc,#dcdcdc 50%,#e6e6e6);"></div>
<div class="a" style="left:965.5px;top:245px;width:26px;height:25.5px;background:#f3f3f3;border:3px solid #ebebeb;"></div>
<div class="a" style="left:973.5px;top:257px;width:3px;height:8.5px;background:#7a7a7a;"></div>
<div class="a" style="left:973.5px;top:262.5px;width:9px;height:3px;background:#7a7a7a;"></div>
<div class="a" style="left:996px;top:247px;width:39px;height:21px;background:#c6c6c6;"></div>
<div class="a" style="left:1037px;top:247px;width:718.5px;height:21px;background:#ffffff;"></div>
<div class="a" style="left:1755.5px;top:247px;width:115px;height:21px;background:#c6c6c6;"></div>
<div class="a" style="left:1001px;top:256.5px;width:1px;height:3.5px;background:#555;"></div>
<div class="a" style="left:1012px;top:254.5px;width:1px;height:8.5px;background:#555;"></div>
<div class="a" style="left:1023px;top:256.5px;width:1px;height:3.5px;background:#555;"></div>
<div class="a" style="left:1046px;top:256.5px;width:1px;height:3.5px;background:#555;"></div>
<div class="a" style="left:1057px;top:254.5px;width:1px;height:8.5px;background:#555;"></div>
<div class="a" style="left:1068px;top:256.5px;width:1px;height:3.5px;background:#555;"></div>
<span class="t" style="left:1076.41px;top:245.00px;font-size:14px;line-height:26px;color:#444;transform:scaleX(0.9300);transform-origin:50% 0;">1</span>
<div class="a" style="left:1091px;top:256.5px;width:1px;height:3.5px;background:#555;"></div>
<div class="a" style="left:1102px;top:254.5px;width:1px;height:8.5px;background:#555;"></div>
<div class="a" style="left:1114px;top:256.5px;width:1px;height:3.5px;background:#555;"></div>
<span class="t" style="left:1121.71px;top:245.00px;font-size:14px;line-height:26px;color:#444;transform:scaleX(0.9300);transform-origin:50% 0;">2</span>
<div class="a" style="left:1136px;top:256.5px;width:1px;height:3.5px;background:#555;"></div>
<div class="a" style="left:1148px;top:254.5px;width:1px;height:8.5px;background:#555;"></div>
<div class="a" style="left:1159px;top:256.5px;width:1px;height:3.5px;background:#555;"></div>
<span class="t" style="left:1167.01px;top:245.00px;font-size:14px;line-height:26px;color:#444;transform:scaleX(0.9300);transform-origin:50% 0;">3</span>
<div class="a" style="left:1182px;top:256.5px;width:1px;height:3.5px;background:#555;"></div>
<div class="a" style="left:1193px;top:254.5px;width:1px;height:8.5px;background:#555;"></div>
<div class="a" style="left:1204px;top:256.5px;width:1px;height:3.5px;background:#555;"></div>
<span class="t" style="left:1212.31px;top:245.00px;font-size:14px;line-height:26px;color:#444;transform:scaleX(0.9300);transform-origin:50% 0;">4</span>
<div class="a" style="left:1227px;top:256.5px;width:1px;height:3.5px;background:#555;"></div>
<div class="a" style="left:1238px;top:254.5px;width:1px;height:8.5px;background:#555;"></div>
<div class="a" style="left:1250px;top:256.5px;width:1px;height:3.5px;background:#555;"></div>
<span class="t" style="left:1257.61px;top:245.00px;font-size:14px;line-height:26px;color:#444;transform:scaleX(0.9300);transform-origin:50% 0;">5</span>
<div class="a" style="left:1272px;top:256.5px;width:1px;height:3.5px;background:#555;"></div>
<div class="a" style="left:1284px;top:254.5px;width:1px;height:8.5px;background:#555;"></div>
<div class="a" style="left:1295px;top:256.5px;width:1px;height:3.5px;background:#555;"></div>
<span class="t" style="left:1302.91px;top:245.00px;font-size:14px;line-height:26px;color:#444;transform:scaleX(0.9300);transform-origin:50% 0;">6</span>
<div class="a" style="left:1318px;top:256.5px;width:1px;height:3.5px;background:#555;"></div>
<div class="a" style="left:1329px;top:254.5px;width:1px;height:8.5px;background:#555;"></div>
<div class="a" style="left:1340px;top:256.5px;width:1px;height:3.5px;background:#555;"></div>
<span class="t" style="left:1348.21px;top:245.00px;font-size:14px;line-height:26px;color:#444;transform:scaleX(0.9300);transform-origin:50% 0;">7</span>
<div class="a" style="left:1363px;top:256.5px;width:1px;height:3.5px;background:#555;"></div>
<div class="a" style="left:1374px;top:254.5px;width:1px;height:8.5px;background:#555;"></div>
<div class="a" style="left:1386px;top:256.5px;width:1px;height:3.5px;background:#555;"></div>
<span class="t" style="left:1393.51px;top:245.00px;font-size:14px;line-height:26px;color:#444;transform:scaleX(0.9300);transform-origin:50% 0;">8</span>
<div class="a" style="left:1408px;top:256.5px;width:1px;height:3.5px;background:#555;"></div>
<div class="a" style="left:1420px;top:254.5px;width:1px;height:8.5px;background:#555;"></div>
<div class="a" style="left:1431px;top:256.5px;width:1px;height:3.5px;background:#555;"></div>
<span class="t" style="left:1438.81px;top:245.00px;font-size:14px;line-height:26px;color:#444;transform:scaleX(0.9300);transform-origin:50% 0;">9</span>
<div class="a" style="left:1454px;top:256.5px;width:1px;height:3.5px;background:#555;"></div>
<div class="a" style="left:1465px;top:254.5px;width:1px;height:8.5px;background:#555;"></div>
<div class="a" style="left:1476px;top:256.5px;width:1px;height:3.5px;background:#555;"></div>
<span class="t" style="left:1480.21px;top:245.00px;font-size:14px;line-height:26px;color:#444;transform:scaleX(0.9300);transform-origin:50% 0;">10</span>
<div class="a" style="left:1499px;top:256.5px;width:1px;height:3.5px;background:#555;"></div>
<div class="a" style="left:1510px;top:254.5px;width:1px;height:8.5px;background:#555;"></div>
<div class="a" style="left:1521px;top:256.5px;width:1px;height:3.5px;background:#555;"></div>
<span class="t" style="left:1525.51px;top:245.00px;font-size:14px;line-height:26px;color:#444;transform:scaleX(0.9300);transform-origin:50% 0;">11</span>
<div class="a" style="left:1544px;top:256.5px;width:1px;height:3.5px;background:#555;"></div>
<div class="a" style="left:1555px;top:254.5px;width:1px;height:8.5px;background:#555;"></div>
<div class="a" style="left:1567px;top:256.5px;width:1px;height:3.5px;background:#555;"></div>
<span class="t" style="left:1570.81px;top:245.00px;font-size:14px;line-height:26px;color:#444;transform:scaleX(0.9300);transform-origin:50% 0;">12</span>
<div class="a" style="left:1589px;top:256.5px;width:1px;height:3.5px;background:#555;"></div>
<div class="a" style="left:1601px;top:254.5px;width:1px;height:8.5px;background:#555;"></div>
<div class="a" style="left:1612px;top:256.5px;width:1px;height:3.5px;background:#555;"></div>
<span class="t" style="left:1616.11px;top:245.00px;font-size:14px;line-height:26px;color:#444;transform:scaleX(0.9300);transform-origin:50% 0;">13</span>
<div class="a" style="left:1635px;top:256.5px;width:1px;height:3.5px;background:#555;"></div>
<div class="a" style="left:1646px;top:254.5px;width:1px;height:8.5px;background:#555;"></div>
<div class="a" style="left:1657px;top:256.5px;width:1px;height:3.5px;background:#555;"></div>
<span class="t" style="left:1661.41px;top:245.00px;font-size:14px;line-height:26px;color:#444;transform:scaleX(0.9300);transform-origin:50% 0;">14</span>
<div class="a" style="left:1680px;top:256.5px;width:1px;height:3.5px;background:#555;"></div>
<div class="a" style="left:1691px;top:254.5px;width:1px;height:8.5px;background:#555;"></div>
<div class="a" style="left:1703px;top:256.5px;width:1px;height:3.5px;background:#555;"></div>
<span class="t" style="left:1706.71px;top:245.00px;font-size:14px;line-height:26px;color:#444;transform:scaleX(0.9300);transform-origin:50% 0;">15</span>
<div class="a" style="left:1725px;top:256.5px;width:1px;height:3.5px;background:#555;"></div>
<div class="a" style="left:1737px;top:254.5px;width:1px;height:8.5px;background:#555;"></div>
<div class="a" style="left:1748px;top:256.5px;width:1px;height:3.5px;background:#555;"></div>
<div class="a" style="left:1771px;top:256.5px;width:1px;height:3.5px;background:#555;"></div>
<div class="a" style="left:1782px;top:254.5px;width:1px;height:8.5px;background:#555;"></div>
<div class="a" style="left:1793px;top:256.5px;width:1px;height:3.5px;background:#555;"></div>
<span class="t" style="left:1797.31px;top:245.00px;font-size:14px;line-height:26px;color:#444;transform:scaleX(0.9300);transform-origin:50% 0;">17</span>
<div class="a" style="left:1816px;top:256.5px;width:1px;height:3.5px;background:#555;"></div>
<div class="a" style="left:1827px;top:254.5px;width:1px;height:8.5px;background:#555;"></div>
<div class="a" style="left:1839px;top:256.5px;width:1px;height:3.5px;background:#555;"></div>
<span class="t" style="left:1842.61px;top:245.00px;font-size:14px;line-height:26px;color:#444;transform:scaleX(0.9300);transform-origin:50% 0;">18</span>
<div class="a" style="left:1861px;top:256.5px;width:1px;height:3.5px;background:#555;"></div>
<svg style="left:1057px;top:243px" width="16" height="16"><path d="M1.5 1.5 H13 V6.5 L7.25 12.6 L1.5 6.5 Z" fill="#fff" stroke="#8a8a8a" stroke-width="1"/></svg>
<svg style="left:1086px;top:257px" width="16" height="22"><path d="M1.5 19.5 V8 L7.2 2 L13 8 V19.5 Z" fill="#fff" stroke="#8a8a8a" stroke-width="1"/><path d="M1.5 13.5 H13" stroke="#8a8a8a" stroke-width="1"/><path d="M7 4.8 V10.6 H14.6" fill="none" stroke="#7a7a7a" stroke-width="2"/></svg>
<svg style="left:1749px;top:257px" width="16" height="16"><path d="M1.5 13.5 V8 L7.5 1.8 L13.5 8 V13.5 Z" fill="#fff" stroke="#8a8a8a" stroke-width="1"/></svg>
<div class="a" style="left:967px;top:277px;width:22px;height:687px;background:#ffffff;"></div>
<div class="a" style="left:976px;top:277px;width:8px;height:1px;background:#555;"></div>
<div class="a" style="left:979px;top:288px;width:3px;height:1px;background:#555;"></div>
<span class="t" style="left:959.3px;top:292.0px;width:40px;height:16px;line-height:16px;text-align:center;font-size:14.5px;color:#444;transform:rotate(-90deg) scaleX(0.93);">11</span>
<div class="a" style="left:979px;top:311px;width:3px;height:1px;background:#555;"></div>
<div class="a" style="left:976px;top:322px;width:8px;height:1px;background:#555;"></div>
<div class="a" style="left:979px;top:333px;width:3px;height:1px;background:#555;"></div>
<span class="t" style="left:959.3px;top:337.3px;width:40px;height:16px;line-height:16px;text-align:center;font-size:14.5px;color:#444;transform:rotate(-90deg) scaleX(0.93);">12</span>
<div class="a" style="left:979px;top:356px;width:3px;height:1px;background:#555;"></div>
<div class="a" style="left:976px;top:367px;width:8px;height:1px;background:#555;"></div>
<div class="a" style="left:979px;top:379px;width:3px;height:1px;background:#555;"></div>
<span class="t" style="left:959.3px;top:382.6px;width:40px;height:16px;line-height:16px;text-align:center;font-size:14.5px;color:#444;transform:rotate(-90deg) scaleX(0.93);">13</span>
<div class="a" style="left:979px;top:401px;width:3px;height:1px;background:#555;"></div>
<div class="a" style="left:976px;top:413px;width:8px;height:1px;background:#555;"></div>
<div class="a" style="left:979px;top:424px;width:3px;height:1px;background:#555;"></div>
<span class="t" style="left:959.3px;top:427.9px;width:40px;height:16px;line-height:16px;text-align:center;font-size:14.5px;color:#444;transform:rotate(-90deg) scaleX(0.93);">14</span>
<div class="a" style="left:979px;top:447px;width:3px;height:1px;background:#555;"></div>
<div class="a" style="left:976px;top:458px;width:8px;height:1px;background:#555;"></div>
<div class="a" style="left:979px;top:469px;width:3px;height:1px;background:#555;"></div>
<span class="t" style="left:959.3px;top:473.2px;width:40px;height:16px;line-height:16px;text-align:center;font-size:14.5px;color:#444;transform:rotate(-90deg) scaleX(0.93);">15</span>
<div class="a" style="left:979px;top:492px;width:3px;height:1px;background:#555;"></div>
<div class="a" style="left:976px;top:503px;width:8px;height:1px;background:#555;"></div>
<div class="a" style="left:979px;top:515px;width:3px;height:1px;background:#555;"></div>
<span class="t" style="left:959.3px;top:518.5px;width:40px;height:16px;line-height:16px;text-align:center;font-size:14.5px;color:#444;transform:rotate(-90deg) scaleX(0.93);">16</span>
<div class="a" style="left:979px;top:537px;width:3px;height:1px;background:#555;"></div>
<div class="a" style="left:976px;top:549px;width:8px;height:1px;background:#555;"></div>
<div class="a" style="left:979px;top:560px;width:3px;height:1px;background:#555;"></div>
<span class="t" style="left:959.3px;top:563.8px;width:40px;height:16px;line-height:16px;text-align:center;font-size:14.5px;color:#444;transform:rotate(-90deg) scaleX(0.93);">17</span>
<div class="a" style="left:979px;top:583px;width:3px;height:1px;background:#555;"></div>
<div class="a" style="left:976px;top:594px;width:8px;height:1px;background:#555;"></div>
<div class="a" style="left:979px;top:605px;width:3px;height:1px;background:#555;"></div>
<span class="t" style="left:959.3px;top:609.1px;width:40px;height:16px;line-height:16px;text-align:center;font-size:14.5px;color:#444;transform:rotate(-90deg) scaleX(0.93);">18</span>
<div class="a" style="left:979px;top:628px;width:3px;height:1px;background:#555;"></div>
<div class="a" style="left:976px;top:639px;width:8px;height:1px;background:#555;"></div>
<div class="a" style="left:979px;top:651px;width:3px;height:1px;background:#555;"></div>
<span class="t" style="left:959.3px;top:654.4px;width:40px;height:16px;line-height:16px;text-align:center;font-size:14.5px;color:#444;transform:rotate(-90deg) scaleX(0.93);">19</span>
<div class="a" style="left:979px;top:673px;width:3px;height:1px;background:#555;"></div>
<div class="a" style="left:976px;top:685px;width:8px;height:1px;background:#555;"></div>
<div class="a" style="left:979px;top:696px;width:3px;height:1px;background:#555;"></div>
<span class="t" style="left:959.3px;top:699.7px;width:40px;height:16px;line-height:16px;text-align:center;font-size:14.5px;color:#444;transform:rotate(-90deg) scaleX(0.93);">20</span>
<div class="a" style="left:979px;top:719px;width:3px;height:1px;background:#555;"></div>
<div class="a" style="left:976px;top:730px;width:8px;height:1px;background:#555;"></div>
<div class="a" style="left:979px;top:741px;width:3px;height:1px;background:#555;"></div>
<span class="t" style="left:959.3px;top:745.0px;width:40px;height:16px;line-height:16px;text-align:center;font-size:14.5px;color:#444;transform:rotate(-90deg) scaleX(0.93);">21</span>
<div class="a" style="left:979px;top:764px;width:3px;height:1px;background:#555;"></div>
<div class="a" style="left:976px;top:775px;width:8px;height:1px;background:#555;"></div>
<div class="a" style="left:979px;top:786px;width:3px;height:1px;background:#555;"></div>
<span class="t" style="left:959.3px;top:790.3px;width:40px;height:16px;line-height:16px;text-align:center;font-size:14.5px;color:#444;transform:rotate(-90deg) scaleX(0.93);">22</span>
<div class="a" style="left:979px;top:809px;width:3px;height:1px;background:#555;"></div>
<div class="a" style="left:976px;top:820px;width:8px;height:1px;background:#555;"></div>
<div class="a" style="left:979px;top:832px;width:3px;height:1px;background:#555;"></div>
<span class="t" style="left:959.3px;top:835.6px;width:40px;height:16px;line-height:16px;text-align:center;font-size:14.5px;color:#444;transform:rotate(-90deg) scaleX(0.93);">23</span>
<div class="a" style="left:979px;top:854px;width:3px;height:1px;background:#555;"></div>
<div class="a" style="left:976px;top:866px;width:8px;height:1px;background:#555;"></div>
<div class="a" style="left:979px;top:877px;width:3px;height:1px;background:#555;"></div>
<span class="t" style="left:959.3px;top:880.9px;width:40px;height:16px;line-height:16px;text-align:center;font-size:14.5px;color:#444;transform:rotate(-90deg) scaleX(0.93);">24</span>
<div class="a" style="left:979px;top:900px;width:3px;height:1px;background:#555;"></div>
<div class="a" style="left:976px;top:911px;width:8px;height:1px;background:#555;"></div>
<div class="a" style="left:979px;top:922px;width:3px;height:1px;background:#555;"></div>
<span class="t" style="left:959.3px;top:926.2px;width:40px;height:16px;line-height:16px;text-align:center;font-size:14.5px;color:#444;transform:rotate(-90deg) scaleX(0.93);">25</span>
<div class="a" style="left:979px;top:945px;width:3px;height:1px;background:#555;"></div>
<div class="a" style="left:976px;top:956px;width:8px;height:1px;background:#555;"></div>
<div class="a" style="left:962px;top:964px;width:956px;height:33px;background:#f3f2f1;"></div>
<span class="t" style="left:973.50px;top:967.50px;font-size:16px;line-height:27px;color:#444444;transform:scaleX(0.9408);transform-origin:0 0;">Page 1 of 2</span>
<span class="t" style="left:1077.50px;top:967.50px;font-size:16px;line-height:27px;color:#444444;transform:scaleX(0.9889);transform-origin:0 0;">186 words</span>
<svg style="left:1177px;top:971px" width="25" height="22" viewBox="0 0 25 22"><g fill="none" stroke="#444" stroke-width="1.4">
<path d="M11 3.5 C8 1.2 4.5 1.2 1.6 2.4 V17 C4.5 15.8 8 15.8 11 18 M11 3.5 V18 M11 3.5 C14 1.2 17.5 1.2 20.4 2.4 V9"/>
<path d="M13.6 12.4 L21.6 20.4 M21.6 12.4 L13.6 20.4" stroke-width="1.6"/></g></svg>
<svg style="left:1373px;top:970px" width="24" height="24" viewBox="0 0 24 24"><g fill="none" stroke="#444" stroke-width="1.4">
<path d="M1.4 6 V1.4 H6 M18 1.4 H22.4 V6 M22.4 17.6 V22.4 H18 M6 22.4 H1.4 V17.6"/>
<path d="M6 5 H13.4 L17.6 9.2 V19 H6 Z M13.4 5 V9.2 H17.6"/></g></svg>
<span class="t" style="left:1400.00px;top:967.50px;font-size:16px;line-height:27px;color:#444444;transform:scaleX(0.8951);transform-origin:0 0;">Focus</span>
<svg style="left:1474px;top:970px" width="24" height="22" viewBox="0 0 24 22"><g fill="none" stroke="#444" stroke-width="1.4">
<path d="M11.8 2.4 C9.6 1.4 5 1.2 1.6 1.6 V17.6 C5 17.2 9.6 17.4 11.8 19.4 C14 17.4 18.6 17.2 22 17.6 V1.6 C18.6 1.2 14 1.4 11.8 2.4 V19.4"/>
<path d="M4 5.4 H9.4 M4 8.2 H9.4 M4 11 H9.4 M4 13.8 H9.4 M14.2 5.4 H19.6 M14.2 8.2 H19.6 M14.2 11 H19.6 M14.2 13.8 H19.6" stroke-width="1.1"/></g></svg>
<div class="a" style="left:1516px;top:964px;width:60px;height:33px;background:#c8c6c4;"></div>
<svg style="left:1535px;top:970px" width="22" height="23" viewBox="0 0 22 23"><rect x="1.6" y="1.4" width="17.4" height="20" fill="none" stroke="#444" stroke-width="1.5"/><path d="M4.4 5.4 H16.2 M4.4 8.5 H16.2 M4.4 11.6 H16.2 M4.4 14.7 H16.2 M4.4 17.8 H16.2" stroke="#444" stroke-width="1.4"/></svg>
<svg style="left:1594px;top:970px" width="25" height="24" viewBox="0 0 25 24"><g fill="none" stroke="#444" stroke-width="1.3"><path d="M11 20.4 H1.4 V1.4 H19.4 V9"/><path d="M1.4 5 H19.4" stroke-width="1.6"/><path d="M4.4 8.6 H16 M4.4 11.8 H10.6 M4.4 15 H9.6" stroke-width="1"/>
<circle cx="17" cy="16.6" r="6" fill="#f3f2f1"/><path d="M11 16.6 H23 M17 10.6 V22.6 M17 10.6 C13.6 13.6 13.6 19.6 17 22.6 M17 10.6 C20.4 13.6 20.4 19.6 17 22.6" stroke-width="1"/></g></svg>
<div class="a" style="left:1644px;top:980.5px;width:12.5px;height:1.3px;background:#444;"></div>
<div class="a" style="left:1664px;top:980.5px;width:147.5px;height:1px;background:#8a8886;"></div>
<div class="a" style="left:1737px;top:976px;width:1px;height:10px;background:#8a8886;"></div>
<div class="a" style="left:1718.5px;top:971.5px;width:8px;height:18.5px;background:#605e5c;"></div>
<div class="a" style="left:1820px;top:980.5px;width:12px;height:1.3px;background:#444;"></div>
<div class="a" style="left:1825.4px;top:975px;width:1.3px;height:12px;background:#444;"></div>
<span class="t" style="left:1850.00px;top:967.50px;font-size:16px;line-height:27px;color:#444444;transform:scaleX(0.9680);transform-origin:0 0;">80%</span>
<div class="a" style="left:997px;top:277px;width:875px;height:661px;background:#ffffff;border-right:1px solid #d4d4d4;"></div>
<div class="a" style="left:1037px;top:277px;width:1px;height:661px;background:repeating-linear-gradient(180deg,#000 0 1px,transparent 1px 2px)"></div>
<div class="a" style="left:1757px;top:277px;width:1px;height:661px;background:repeating-linear-gradient(180deg,#000 0 1px,transparent 1px 2px)"></div>
<div class="a" style="left:1037px;top:306px;width:721px;height:1px;background:repeating-linear-gradient(90deg,#000 0 1px,transparent 1px 2px)"></div>
<div class="a" style="left:1038px;top:307px;width:720px;height:1px;background:repeating-linear-gradient(90deg,#000 0 1px,transparent 1px 2px)"></div>
<div class="a" style="left:1037px;top:339px;width:721px;height:1px;background:repeating-linear-gradient(90deg,#000 0 1px,transparent 1px 2px)"></div>
<div class="a" style="left:1038px;top:340px;width:720px;height:1px;background:repeating-linear-gradient(90deg,#000 0 1px,transparent 1px 2px)"></div>
<div class="a" style="left:1037px;top:438px;width:721px;height:1px;background:repeating-linear-gradient(90deg,#000 0 1px,transparent 1px 2px)"></div>
<div class="a" style="left:1038px;top:439px;width:720px;height:1px;background:repeating-linear-gradient(90deg,#000 0 1px,transparent 1px 2px)"></div>
<div class="a" style="left:1037px;top:504px;width:721px;height:1px;background:repeating-linear-gradient(90deg,#000 0 1px,transparent 1px 2px)"></div>
<div class="a" style="left:1038px;top:505px;width:720px;height:1px;background:repeating-linear-gradient(90deg,#000 0 1px,transparent 1px 2px)"></div>
<div class="a" style="left:1037px;top:570px;width:721px;height:1px;background:repeating-linear-gradient(90deg,#000 0 1px,transparent 1px 2px)"></div>
<div class="a" style="left:1038px;top:571px;width:720px;height:1px;background:repeating-linear-gradient(90deg,#000 0 1px,transparent 1px 2px)"></div>
<div class="a" style="left:1037px;top:670px;width:721px;height:1px;background:repeating-linear-gradient(90deg,#000 0 1px,transparent 1px 2px)"></div>
<div class="a" style="left:1038px;top:671px;width:720px;height:1px;background:repeating-linear-gradient(90deg,#000 0 1px,transparent 1px 2px)"></div>
<div class="a" style="left:1037px;top:736px;width:721px;height:1px;background:repeating-linear-gradient(90deg,#000 0 1px,transparent 1px 2px)"></div>
<div class="a" style="left:1038px;top:737px;width:720px;height:1px;background:repeating-linear-gradient(90deg,#000 0 1px,transparent 1px 2px)"></div>
<div class="a" style="left:1037px;top:769px;width:721px;height:1px;background:repeating-linear-gradient(90deg,#000 0 1px,transparent 1px 2px)"></div>
<div class="a" style="left:1038px;top:770px;width:720px;height:1px;background:repeating-linear-gradient(90deg,#000 0 1px,transparent 1px 2px)"></div>
<div class="a" style="left:1037px;top:802px;width:721px;height:1px;background:repeating-linear-gradient(90deg,#000 0 1px,transparent 1px 2px)"></div>
<div class="a" style="left:1038px;top:803px;width:720px;height:1px;background:repeating-linear-gradient(90deg,#000 0 1px,transparent 1px 2px)"></div>
<div class="a" style="left:1037px;top:835px;width:721px;height:1px;background:repeating-linear-gradient(90deg,#000 0 1px,transparent 1px 2px)"></div>
<div class="a" style="left:1038px;top:836px;width:720px;height:1px;background:repeating-linear-gradient(90deg,#000 0 1px,transparent 1px 2px)"></div>
<div class="a" style="left:1037px;top:868px;width:721px;height:1px;background:repeating-linear-gradient(90deg,#000 0 1px,transparent 1px 2px)"></div>
<div class="a" style="left:1038px;top:869px;width:720px;height:1px;background:repeating-linear-gradient(90deg,#000 0 1px,transparent 1px 2px)"></div>
<div class="a" style="left:1037px;top:901px;width:721px;height:1px;background:repeating-linear-gradient(90deg,#000 0 1px,transparent 1px 2px)"></div>
<div class="a" style="left:1038px;top:902px;width:720px;height:1px;background:repeating-linear-gradient(90deg,#000 0 1px,transparent 1px 2px)"></div>
<div class="a" style="left:1037px;top:935px;width:721px;height:1px;background:repeating-linear-gradient(90deg,#000 0 1px,transparent 1px 2px)"></div>
<div class="a" style="left:1038px;top:936px;width:720px;height:1px;background:repeating-linear-gradient(90deg,#000 0 1px,transparent 1px 2px)"></div>
<span class="t" style="left:1037.30px;top:302.80px;font-size:19.2px;line-height:31px;color:#000;font-weight:bold;">A.</span>
<span class="t" style="left:1059.60px;top:302.80px;font-size:19.2px;line-height:31px;color:#000;font-weight:bold;">URAIAN RAPAT</span>
<span class="t" style="left:1058.60px;top:335.80px;font-size:19.2px;line-height:31px;color:#000;">1.</span>
<div class="t" style="left:1093.2px;top:335.80px;width:664.20px;font-size:19.2px;line-height:31px;color:#000;text-align:justify;text-align-last:justify;white-space:normal;">Pemaparan pertama dari Ibu Linda Resta perwakilan Deputi Bidang</div>
<div class="t" style="left:1093.2px;top:368.87px;width:664.20px;font-size:19.2px;line-height:31px;color:#000;text-align:justify;text-align-last:justify;white-space:normal;">Peningkatan Kualitas Kesehatan Kementerian Koordinator Bidang</div>
<div class="t" style="left:1093.2px;top:401.94px;width:664.20px;font-size:19.2px;line-height:31px;color:#000;">Pembangunan Manusia dan Kebudayaan:</div>
<span class="t" style="left:1093.30px;top:434.80px;font-size:19.2px;line-height:31px;color:#000;">a.</span>
<div class="t" style="left:1127.4px;top:434.80px;width:630.00px;font-size:19.2px;line-height:31px;color:#000;text-align:justify;text-align-last:justify;white-space:normal;">Tujuan Rapat yaitu menyamakan persepsi, koordinasi dan sinkronisasi,</div>
<div class="t" style="left:1127.4px;top:467.87px;width:630.00px;font-size:19.2px;line-height:31px;color:#000;">dan rencana pembentukan regulasi.</div>
<span class="t" style="left:1093.30px;top:500.80px;font-size:19.2px;line-height:31px;color:#000;">b.</span>
<div class="t" style="left:1127.4px;top:500.80px;width:630.00px;font-size:19.2px;line-height:31px;color:#000;text-align:justify;text-align-last:justify;white-space:normal;">Di indonesia masyarakat yang mengalami gangguan jiwa cukup tinggi</div>
<div class="t" style="left:1127.4px;top:533.87px;width:630.00px;font-size:19.2px;line-height:31px;color:#000;">walaupun belum setinggi di Kamboja dan Thailand.</div>
<span class="t" style="left:1093.30px;top:566.80px;font-size:19.2px;line-height:31px;color:#000;">c.</span>
<div class="t" style="left:1127.4px;top:566.80px;width:630.00px;font-size:19.2px;line-height:31px;color:#000;text-align:justify;text-align-last:justify;white-space:normal;">Di daerah sudah terbentuk TPKJM ada di 18 provinsi, dengan isu</div>
<div class="t" style="left:1127.4px;top:599.87px;width:630.00px;font-size:19.2px;line-height:31px;color:#000;text-align:justify;text-align-last:justify;white-space:normal;">permasalahan Pelayanan masih bersifat sektoral fragmentaris (belum ada</div>
<div class="t" style="left:1127.4px;top:632.94px;width:630.00px;font-size:19.2px;line-height:31px;color:#000;">skema perlindungan)</div>
<span class="t" style="left:1093.30px;top:666.80px;font-size:19.2px;line-height:31px;color:#000;">d.</span>
<div class="t" style="left:1127.4px;top:666.80px;width:630.00px;font-size:19.2px;line-height:31px;color:#000;text-align:justify;text-align-last:justify;white-space:normal;">Kami sudah menyusun draf awal dan kami sangat mengharapkan saran</div>
<div class="t" style="left:1127.4px;top:699.87px;width:630.00px;font-size:19.2px;line-height:31px;color:#000;">dan masukan dari Bapak Ibu peserta zoom.</div>
<span class="t" style="left:1065.50px;top:732.80px;font-size:19.2px;line-height:31px;color:#000;">2.</span>
<div class="t" style="left:1093.2px;top:732.80px;width:664.20px;font-size:19.2px;line-height:31px;color:#000;">Kementerian Kesehatan diwakili oleh Pak Leon selaku</div>
<div class="a" style="left:1555.5px;top:738px;width:1px;height:23px;background:#000;"></div>
<span class="t" style="left:1065.50px;top:765.80px;font-size:19.2px;line-height:31px;color:#000;">3.</span>
<div class="t" style="left:1093.2px;top:765.80px;width:664.20px;font-size:19.2px;line-height:31px;color:#000;">Kementerian Sosial</div>
<span class="t" style="left:1492.50px;top:898.90px;font-size:19.2px;line-height:31px;color:#000;">Notulis</span>
<div class="a" style="left:0px;top:999px;width:1920px;height:9px;background:linear-gradient(90deg,#b4b0be 0,#a9a5b3 565px,#c9c8cc 565px,#d0d0d2 1333px,#b6b2c0 1333px,#c4c0cc 1897px);"></div>
<div class="a" style="left:1897px;top:999px;width:23px;height:9px;background:#222;"></div>
<svg style="left:1901px;top:999px" width="14" height="6"><path d="M1 0 H13 L7 5.4 Z" fill="#8a8a8a"/></svg>
<div class="a" style="left:0px;top:1008px;width:1920px;height:72px;background:#202020;"></div>
<div class="a" style="left:0px;top:1008px;width:1920px;height:2px;background:#404040;"></div>
<svg style="left:24px;top:1014px" width="52" height="50" viewBox="0 0 52 50">
<defs><linearGradient id="wg" x1="0.2" y1="0" x2="0.8" y2="1"><stop offset="0" stop-color="#fbc60a"/><stop offset="0.5" stop-color="#f59a0e"/><stop offset="1" stop-color="#ee6c0a"/></linearGradient></defs>
<circle cx="24.2" cy="30" r="15.3" fill="url(#wg)"/>
<g fill="#f3e2b4"><rect x="12" y="19.6" width="7.5" height="2.8" rx="1.4"/><rect x="12" y="25.6" width="30" height="2.8" rx="1.4"/>
<rect x="6" y="31.6" width="19" height="2.8" rx="1.4"/><rect x="29" y="31.6" width="7" height="2.8" rx="1.4"/><rect x="6" y="37.6" width="30" height="2.8" rx="1.4"/></g>
<circle cx="34.7" cy="16" r="12" fill="#ff9aa8"/></svg>
<span class="t" style="left:54.11px;top:1016.00px;font-size:16.5px;line-height:28px;color:#111;">3</span>
<svg style="left:367px;top:1027px" width="36" height="36" viewBox="0 0 36 36"><defs><linearGradient id="sg" x1="0" y1="0" x2="1" y2="1"><stop offset="0" stop-color="#6fd5fb"/><stop offset="1" stop-color="#1f9cf0"/></linearGradient></defs>
<rect x="0.5" y="0.5" width="16.6" height="16.6" rx="1.5" fill="url(#sg)"/><rect x="18.9" y="0.5" width="16.6" height="16.6" rx="1.5" fill="url(#sg)"/><rect x="0.5" y="18.9" width="16.6" height="16.6" rx="1.5" fill="url(#sg)"/><rect x="18.9" y="18.9" width="16.6" height="16.6" rx="1.5" fill="url(#sg)"/></svg>
<div class="a" style="left:423px;top:1020px;width:330px;height:48px;background:#3b3b3b;border-radius:24px;border:1px solid #505050;"></div>
<svg style="left:438px;top:1031px" width="28" height="28"><circle cx="12" cy="11.5" r="8" fill="none" stroke="#fff" stroke-width="2.2"/><path d="M17.8 17.6 L24.5 24.5" stroke="#fff" stroke-width="2.4" stroke-linecap="round"/></svg>
<span class="t" style="left:479.00px;top:1029.50px;font-size:19.5px;line-height:32px;color:#e6e6e6;transform:scaleX(1.0070);transform-origin:0 0;">Cari</span>
<svg style="left:672px;top:1024px" width="78" height="44" viewBox="0 0 78 44">
<defs><linearGradient id="hg" x1="0.3" y1="0" x2="0.5" y2="1"><stop offset="0" stop-color="#86cc4e"/><stop offset="0.55" stop-color="#4db04e"/><stop offset="1" stop-color="#2f9a58"/></linearGradient>
<linearGradient id="hb" x1="0" y1="0" x2="1" y2="0"><stop offset="0" stop-color="#2a8c9c"/><stop offset="1" stop-color="#2f9a58" stop-opacity="0"/></linearGradient>
<filter id="hbl"><feGaussianBlur stdDeviation="0.5"/></filter></defs>
<circle cx="18.6" cy="9.8" r="6" fill="#f6c945"/>
<g filter="url(#hbl)">
<path d="M2 24 C8 18 18 12 28 10 C36 8.6 46 8.6 52 10.4 C60 16 70 24 74 29 C73 34 62 38 50 40 C42 41 36 40.6 30 38 C22 35.6 10 35 3 32 C0.6 30 0.6 26 2 24 Z" fill="url(#hg)"/>
<path d="M2 24 C0.6 26 0.6 30 3 32 C10 35 22 35.6 30 38 L34 30 C24 30 10 28 2 24Z" fill="url(#hb)"/>
<path d="M6 22 C14 20 24 15 32 11.4 M5 27 C18 25 30 19 42 15 M14 32 C28 30 40 25 50 20 M30 37 C40 35 50 31 56 26 M58 18 C62 22 66 26 70 29 M56 30 C60 31 66 31 72 30" stroke="#2f8f46" stroke-width="1.5" fill="none" opacity="0.8"/>
<path d="M8 20.6 C16 18 24 14 30 11" stroke="#a6dc5c" stroke-width="1.4" fill="none"/>
<path d="M53 12 C57 18 58 24 54 30 C51 34 48 37 46 40.4 L50 40 C52 37 56 33 58 29 C61 23 59 17 55 12 Z" fill="#dcc07a"/>
</g>
<path d="M40.6 7.6 L47 4.2 L53.6 7.6 Z" fill="#3a9aa2"/><path d="M43.2 4.8 L47 2.6 L50.8 4.8Z" fill="#3a9aa2"/>
<rect x="42" y="7.6" width="10.4" height="4.8" fill="#e2634a"/><rect x="44" y="8.4" width="6.4" height="2.2" fill="#f6e6d8"/>
</svg>
<div class="a" style="left:780px;top:1027.5px;width:27.5px;height:24.5px;background:linear-gradient(160deg,#ffffff,#e4e4e4);border-radius:3px;"></div>
<div class="a" style="left:771px;top:1036.2px;width:27.2px;height:24.4px;background:rgba(156,156,156,0.6);border-radius:3px;"></div>
<svg style="left:834px;top:1022px" width="42" height="44" viewBox="0 0 42 44"><path d="M21 5.5 A16.5 16.5 0 1 1 12.4 36.2 L3.4 39.4 L6.6 30.6 A16.5 16.5 0 0 1 21 5.5 Z" fill="none" stroke="#2ecc5e" stroke-width="3.4" stroke-linejoin="round"/>
<path d="M14.5 14 C16 12.6 17.4 13.4 18 15 C18.6 16.6 18.6 17.4 17.4 18.4 C18.6 21.4 20.8 23.6 24 25 C25 23.6 26 23.8 27.6 24.6 C29.2 25.4 29.8 26.4 28.4 28 C26.4 30 23.6 29.6 20.4 27.6 C17.2 25.4 14.6 22.4 13.6 18.8 C13.2 16.8 13.4 15.2 14.5 14 Z" fill="#2ecc5e"/></svg>
<div class="a" style="left:852.5px;top:1018.5px;width:31.5px;height:24.5px;background:#f8d521;border-radius:12.5px;"></div>
<span class="t" style="left:859.88px;top:1017.50px;font-size:15.5px;line-height:27px;color:#111;transform:scaleX(0.9860);transform-origin:50% 0;">49</span>
<div class="a" style="left:852.0px;top:1068.5px;width:8px;height:4px;background:#9a9a9a;border-radius:2px;"></div>
<svg style="left:914.6px;top:1031px" width="14.8" height="25.6" viewBox="0 0 18 30" preserveAspectRatio="none"><path d="M1 0 H6 V30 H1 Z M12 0 H17 V30 H12 Z" fill="#b00710"/><path d="M1 0 H6 L17 30 H12 Z" fill="#e50914"/></svg>
<svg style="left:968px;top:1026px" width="38" height="36" viewBox="0 0 38 36">
<path d="M1 5 C1 3.4 1.8 2.6 3.4 2.6 H12 L15.6 6 H34.6 C36.2 6 37 6.8 37 8.4 V31 C37 32.6 36.2 33.4 34.6 33.4 H3.4 C1.8 33.4 1 32.6 1 31 Z" fill="#f0b21a"/>
<path d="M1 10 H37 V31 C37 32.6 36.2 33.4 34.6 33.4 H3.4 C1.8 33.4 1 32.6 1 31 Z" fill="#fcd354"/>
<path d="M8 25.4 C8 23.8 8.8 23 10.4 23 H27.6 C29.2 23 30 23.8 30 25.4 V33.4 H8 Z" fill="#1a7fd0"/><rect x="12" y="26.6" width="14" height="2.2" rx="1" fill="#0f5aa0"/></svg>
<div class="a" style="left:982.5px;top:1068.5px;width:9px;height:4px;background:#9a9a9a;border-radius:2px;"></div>
<svg style="left:1034px;top:1025px" width="38" height="38" viewBox="0 0 38 38"><defs><linearGradient id="fbg" x1="0" y1="0" x2="0" y2="1"><stop offset="0" stop-color="#19aafd"/><stop offset="1" stop-color="#0765e0"/></linearGradient></defs><circle cx="19" cy="19" r="18.4" fill="url(#fbg)"/>
<path d="M16.2 37.2 V24.2 H11.6 V19 H16.2 V15.2 C16.2 10.4 19 8.2 23 8.2 C24.6 8.2 26 8.4 26.6 8.5 V13 H24.2 C22 13 21.6 14 21.6 15.6 V19 H26.4 L25.6 24.2 H21.6 V37.2 Z" fill="#fff"/></svg>
<svg style="left:1100px;top:1025px" width="38" height="38" viewBox="0 0 38 38"><defs><linearGradient id="eg1" x1="0" y1="0" x2="1" y2="0"><stop offset="0" stop-color="#1f88d6"/><stop offset="0.6" stop-color="#35c1b1"/><stop offset="1" stop-color="#6bdc62"/></linearGradient><linearGradient id="eg2" x1="0" y1="0" x2="0" y2="1"><stop offset="0" stop-color="#1a7fd4"/><stop offset="1" stop-color="#0c4e9c"/></linearGradient></defs>
<path d="M1 18 C2 7 10 0.8 19.6 0.8 C30 0.8 37.4 8 37.4 17 C37.4 23 33 26.6 28 26.6 C24 26.6 22 25 22.6 23 C24 20.6 24 17 21 14.4 C16 10.6 6 12 1 18 Z" fill="url(#eg1)"/>
<path d="M1 18 C0 30 9 37.6 19 37.4 C25 37.4 30 35 33.6 30 C29 32.6 22 32.6 17.6 28 C13 23 14 16 19 13.6 C12 11 3 13 1 18 Z" fill="url(#eg2)"/>
<path d="M33.6 30 C29 32.6 22 32.6 17.6 28 C14.6 24.6 14.2 20.6 15.6 17.4 C10 20 9 29 16 34.6 C21 38 29 37 33.6 30Z" fill="#1560b0"/></svg>
<svg style="left:1167px;top:1026px" width="36" height="36" viewBox="0 0 36 36"><circle cx="18" cy="18" r="17.4" fill="#1ed760"/>
<path d="M8 13 C14.6 10.8 22.6 11.4 28.8 14.8" stroke="#191414" stroke-width="3.2" fill="none" stroke-linecap="round"/><path d="M9 18.8 C14.6 17 21.4 17.6 26.8 20.6" stroke="#191414" stroke-width="2.7" fill="none" stroke-linecap="round"/><path d="M10 24 C14.8 22.8 20 23.2 24.6 25.6" stroke="#191414" stroke-width="2.2" fill="none" stroke-linecap="round"/></svg>
<div class="a" style="left:1180.5px;top:1068.5px;width:9px;height:4px;background:#9a9a9a;border-radius:2px;"></div>
<svg style="left:1232px;top:1025px" width="38" height="38" viewBox="0 0 38 38">
<circle cx="19" cy="19" r="18" fill="#fff"/>
<path d="M19 1 A18 18 0 0 1 34.6 10 H19 A9 9 0 0 0 11.2 14.5 L3.4 10 A18 18 0 0 1 19 1 Z" fill="#db4437"/>
<path d="M34.6 10 A18 18 0 0 1 19 37 L26.8 23.5 A9 9 0 0 0 26.8 14.5 L26.8 10 Z" fill="#f4b400" />
<path d="M34.6 10 H19 A9 9 0 0 1 26.8 23.5 L19 37 A18 18 0 0 0 34.6 10 Z" fill="#f4b400"/>
<path d="M3.4 10 L11.2 23.5 A9 9 0 0 0 26.8 23.5 L19 37 A18 18 0 0 1 3.4 10 Z" fill="#0f9d58"/>
<circle cx="19" cy="19" r="8.6" fill="#fff"/><circle cx="19" cy="19" r="6.8" fill="#4285f4"/></svg>
<div class="a" style="left:1252px;top:1019px;width:25px;height:25px;background:radial-gradient(circle at 45% 40%,#b0705a,#8a6a5a 60%,#9aa0a8);border-radius:50%;"></div>
<div class="a" style="left:1246.5px;top:1068.5px;width:9px;height:4px;background:#9a9a9a;border-radius:2px;"></div>
<div class="a" style="left:1288px;top:1014px;width:58px;height:60px;background:#2d2d2d;border-radius:6px;border:1px solid #383838;"></div>
<svg style="left:1298px;top:1027px" width="38" height="34" viewBox="0 0 38 34">
<path d="M11 1.6 C11 0.7 11.6 0 12.6 0 H35.4 C36.4 0 37 0.7 37 1.6 V9 H11 Z" fill="#41a5ee"/><rect x="11" y="9" width="26" height="8.4" fill="#2b7cd3"/><rect x="11" y="17.4" width="26" height="8.4" fill="#185abd"/>
<path d="M11 25.8 H37 V32.4 C37 33.3 36.4 34 35.4 34 H12.6 C11.6 34 11 33.3 11 32.4 Z" fill="#103f91"/>
<rect x="0.5" y="7.5" width="19" height="19" rx="1.6" fill="#185abd"/></svg>
<span class="t" style="left:1301.39px;top:1031.50px;font-size:14px;line-height:26px;color:#fff;font-weight:bold;">W</span>
<div class="a" style="left:1305.5px;top:1067.5px;width:24px;height:5px;background:#f8d521;border-radius:2.5px;"></div>
<div class="a" style="left:1365px;top:1026px;width:37px;height:36px;background:linear-gradient(#1f6df8,#0b4fd8);border-radius:12px;"></div>
<span class="t" style="left:1369.79px;top:1032.50px;font-size:10.5px;line-height:22px;color:#fff;font-weight:bold;transform:scaleX(0.9119);transform-origin:50% 0;">zoom</span>
<div class="a" style="left:1378.5px;top:1068.5px;width:9px;height:4px;background:#9a9a9a;border-radius:2px;"></div>
<svg style="left:1516px;top:1036px" width="22" height="14"><path d="M2.5 11.5 L11 3 L19.5 11.5" fill="none" stroke="#fff" stroke-width="1.8"/></svg>
<svg style="left:1558px;top:1031px" width="34" height="28" viewBox="0 0 34 28"><g fill="none" stroke="#f5d522" stroke-width="1.5">
<rect x="5.6" y="1.6" width="5.6" height="10.6" rx="2.8"/><path d="M2.6 9 C2.6 16.4 14.2 16.4 14.2 9 M8.4 14.6 V18.6"/>
<path d="M17.6 16.6 L31.4 9.6 L26.6 23.6 L24.6 17.8 Z" stroke-linejoin="round"/></g></svg>
<span class="t" style="left:1617.00px;top:1031.50px;font-size:18px;line-height:30px;color:#fff;transform:scaleX(0.9677);transform-origin:0 0;">IND</span>
<svg style="left:1675px;top:1031px" width="28" height="24" viewBox="0 0 28 24"><g fill="none" stroke="#fff" stroke-width="1.7" stroke-linecap="round"><path d="M2.4 9.4 C9 2.6 19 2.6 25.6 9.4"/><path d="M6 13.4 C10.6 8.8 17.4 8.8 22 13.4"/><path d="M9.8 17.2 C12.2 14.8 15.8 14.8 18.2 17.2"/></g><circle cx="14" cy="20.6" r="1.8" fill="#fff"/></svg>
<svg style="left:1711px;top:1032px" width="28" height="24" viewBox="0 0 28 24"><g fill="none" stroke="#fff" stroke-width="1.5" stroke-linejoin="round" stroke-linecap="round"><path d="M2 8.6 H5.6 L11 3.4 V20.6 L5.6 15.4 H2 Z"/><path d="M14.6 8.6 C16.2 10.6 16.2 13.4 14.6 15.4"/><path d="M17.8 5.8 C20.6 9.4 20.6 14.6 17.8 18.2"/><path d="M21 3 C25.2 8.4 25.2 15.6 21 21"/></g></svg>
<svg style="left:1748px;top:1035px" width="28" height="18" viewBox="0 0 28 18"><rect x="1.4" y="1.6" width="21" height="14" rx="3.4" fill="none" stroke="#fff" stroke-width="1.7"/><rect x="4.4" y="4.6" width="11.6" height="8" rx="1.2" fill="#fff"/><path d="M24.6 6 V11.4" stroke="#fff" stroke-width="2.2" stroke-linecap="round"/></svg>
<span class="t" style="left:1845.45px;top:1017.00px;font-size:18px;line-height:30px;color:#fff;transform:scaleX(0.9546);transform-origin:100% 0;">09.49</span>
<span class="t" style="left:1800.41px;top:1041.00px;font-size:18px;line-height:30px;color:#fff;transform:scaleX(1.0212);transform-origin:100% 0;">21/05/2025</span>
</body></html>
